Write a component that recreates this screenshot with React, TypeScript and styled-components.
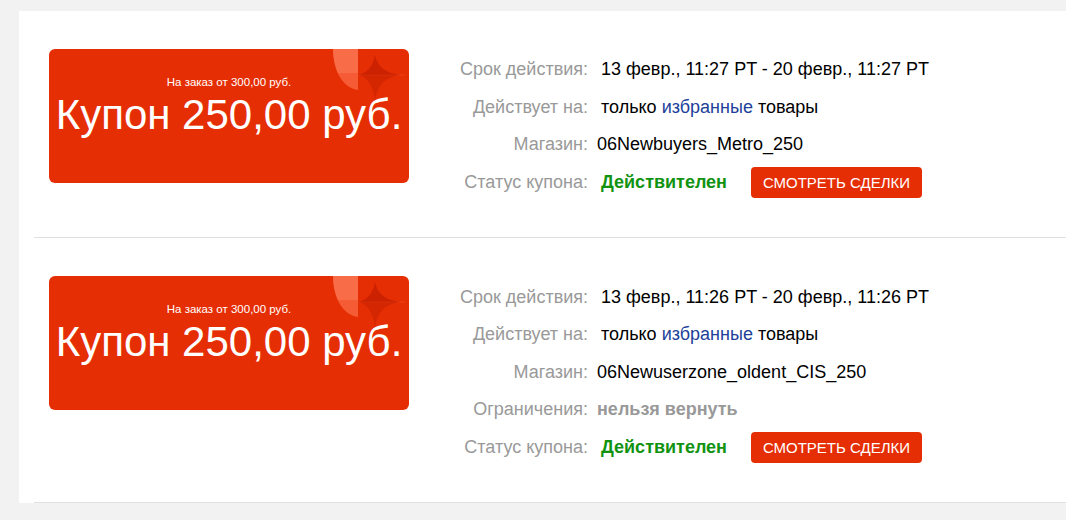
import React from 'react';
import styled, { createGlobalStyle } from 'styled-components';

interface Coupon {
  minOrder: string;
  amount: string;
  period: string;
  store: string;
  restriction?: string;
}

const coupons: Coupon[] = [
  {
    minOrder: 'На заказ от 300,00 руб.',
    amount: 'Купон 250,00 руб.',
    period: '13 февр., 11:27 PT - 20 февр., 11:27 PT',
    store: '06Newbuyers_Metro_250',
  },
  {
    minOrder: 'На заказ от 300,00 руб.',
    amount: 'Купон 250,00 руб.',
    period: '13 февр., 11:26 PT - 20 февр., 11:26 PT',
    store: '06Newuserzone_oldent_CIS_250',
    restriction: 'нельзя вернуть',
  },
];

const CornerDecor: React.FC = () => (
  <Decor width="72" height="54" viewBox="0 0 72 54">
    <path d="M0 0 H25 V41 C11 39 0 24 0 0 Z" fill="#ff7a55" opacity="0.6" />
    <path d="M0 0 H25 V24 H5 C2 17 0 9 0 0 Z" fill="#ff8f6e" opacity="0.35" />
    <path d="M25 26 H72" stroke="#f25530" strokeWidth="1" opacity="0.5" />
    <path
      d="M42 6 Q45 23 67 26 Q45 29 42 51 Q39 29 25 26 Q39 23 42 6 Z"
      fill="#c01c00"
      opacity="0.45"
    />
    <path d="M42 6 Q45 23 67 26 H25 Q39 23 42 6 Z" fill="#b81800" opacity="0.25" />
  </Decor>
);

const App: React.FC = () => {
  return (
    <>
      <GlobalStyle />
      <Panel>
        {coupons.map((c, i) => (
          <CouponRow key={i}>
            <CouponCard>
              <CornerDecor />
              <MinOrder>{c.minOrder}</MinOrder>
              <Amount>{c.amount}</Amount>
            </CouponCard>
            <InfoGrid>
              <Label>Срок действия:</Label>
              <Value $shift>{c.period}</Value>
              <Label>Действует на:</Label>
              <Value $shift>
                только <Link href="#">избранные</Link> товары
              </Value>
              <Label>Магазин:</Label>
              <Value>{c.store}</Value>
              {c.restriction && (
                <>
                  <Label>Ограничения:</Label>
                  <Value $muted>{c.restriction}</Value>
                </>
              )}
              <Label>Статус купона:</Label>
              <Value $shift>
                <Status>Действителен</Status>
                <DealsButton>СМОТРЕТЬ СДЕЛКИ</DealsButton>
              </Value>
            </InfoGrid>
          </CouponRow>
        ))}
      </Panel>
    </>
  );
};

export default App;

const GlobalStyle = createGlobalStyle`
  html, body {
    margin: 0;
    padding: 0;
    background: #f2f2f2;
    font-family: "Liberation Sans", Arial, sans-serif;
  }
`;

const Panel = styled.div`
  margin: 11px 0 0 19px;
  background: #fff;
`;

const CouponRow = styled.div`
  display: flex;
  align-items: flex-start;
  margin-left: 15px;
  padding: 38px 0 36px 15px;
  border-bottom: 1px solid #e0e0e0;
`;

const CouponCard = styled.div`
  position: relative;
  flex: none;
  width: 360px;
  height: 134px;
  box-sizing: border-box;
  padding-top: 26px;
  border-radius: 6px;
  background: #e62e04;
  color: #fff;
  text-align: center;
  overflow: hidden;
`;

const Decor = styled.svg`
  position: absolute;
  top: 0;
  right: 4px;
`;

const MinOrder = styled.div`
  position: relative;
  font-size: 11.5px;
  line-height: 14px;
`;

const Amount = styled.div`
  position: relative;
  margin-top: 2px;
  font-size: 42px;
  line-height: 48px;
  white-space: nowrap;
`;

const InfoGrid = styled.div`
  display: grid;
  grid-template-columns: 139px auto;
  grid-auto-rows: 37.6px;
  column-gap: 9px;
  align-items: center;
  margin: 2px 0 0 40px;
  font-size: 18px;
`;

const Label = styled.div`
  text-align: right;
  color: #999;
  white-space: nowrap;
`;

const Value = styled.div<{ $shift?: boolean; $muted?: boolean }>`
  display: flex;
  align-items: center;
  padding-left: ${(p) => (p.$shift ? '4px' : '0')};
  color: ${(p) => (p.$muted ? '#999' : '#000')};
  font-weight: ${(p) => (p.$muted ? 'bold' : 'normal')};
  white-space: pre;
`;

const Link = styled.a`
  color: #213f99;
  text-decoration: none;
`;

const Status = styled.span`
  color: #119311;
  font-weight: bold;
`;

const DealsButton = styled.button`
  margin-left: 24px;
  width: 171px;
  height: 31px;
  padding: 0;
  border: none;
  border-radius: 4px;
  background: #e62e04;
  color: #fff;
  font-family: "Liberation Sans", Arial, sans-serif;
  font-size: 15px;
  cursor: pointer;
`;
